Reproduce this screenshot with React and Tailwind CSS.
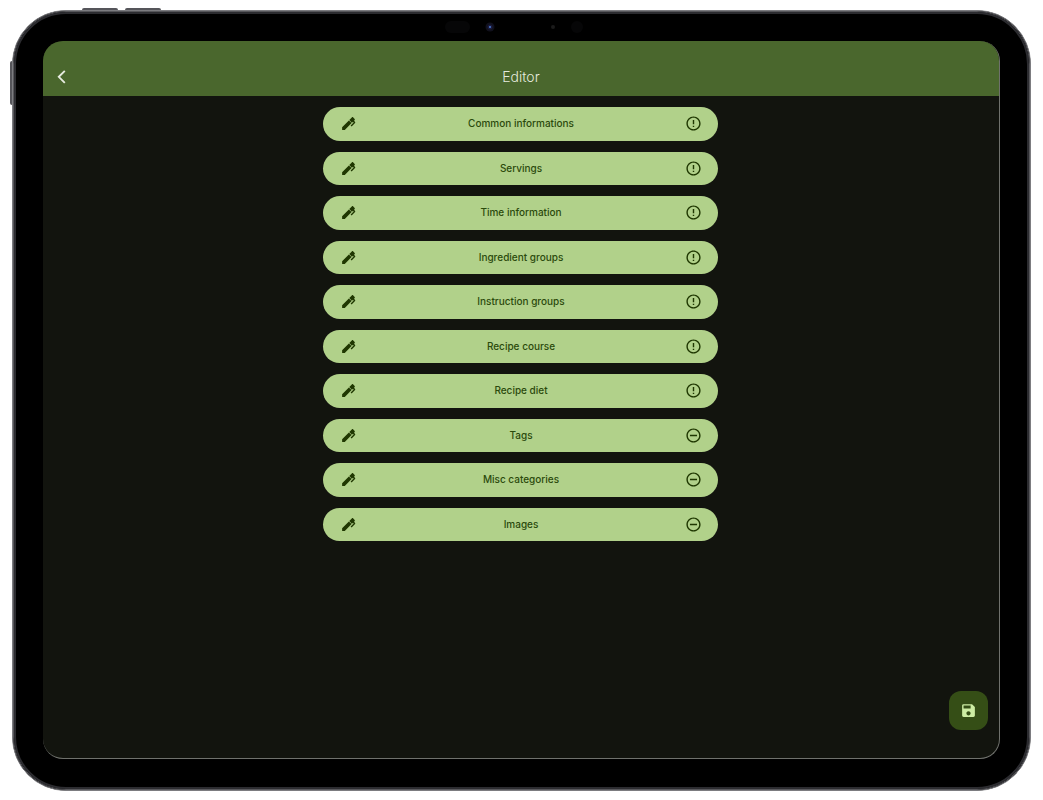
import React from "react";
import { MdErrorOutline, MdRemoveCircleOutline, MdSave } from "react-icons/md";

const sections = [
  { label: "Common informations", status: "required" },
  { label: "Servings", status: "required" },
  { label: "Time information", status: "required" },
  { label: "Ingredient groups", status: "required" },
  { label: "Instruction groups", status: "required" },
  { label: "Recipe course", status: "required" },
  { label: "Recipe diet", status: "required" },
  { label: "Tags", status: "empty" },
  { label: "Misc categories", status: "empty" },
  { label: "Images", status: "empty" },
];

function PenIcon() {
  return (
    <svg viewBox="0 0 24 24" className="size-[17px]" fill="currentColor" aria-hidden="true">
      <path d="M20.71,7.04C20.37,7.38 20.04,7.71 20.03,8.04C20,8.36 20.34,8.69 20.66,9C21.14,9.5 21.61,9.95 21.59,10.44C21.57,10.93 21.06,11.44 20.55,11.94L16.42,16.08L15,14.66L19.25,10.42L18.29,9.46L16.87,10.87L13.12,7.12L16.96,3.29C17.35,2.9 18,2.9 18.37,3.29L20.71,5.63C21.1,6 21.1,6.65 20.71,7.04M3,17.25L12.56,7.68L16.31,11.43L6.75,21H3V17.25Z" />
    </svg>
  );
}

function SectionButton({ label, status }) {
  const StatusIcon = status === "required" ? MdErrorOutline : MdRemoveCircleOutline;
  return (
    <button
      type="button"
      className="flex w-full items-center justify-between rounded-full bg-[#b1d18a] pr-4 pl-[17px] text-[10px] font-medium text-[#1f3701]"
    >
      <PenIcon />
      <span className="text-[#2b4a0c]">{label}</span>
      <StatusIcon className="size-[17px]" aria-hidden="true" />
    </button>
  );
}

function DeviceFrame({ children }) {
  return (
    <div className="relative flex flex-1 rounded-[54px] border border-[#7c7c80] bg-black">
      <div className="absolute -top-[3px] left-[69px] h-[2px] w-9 rounded-t-sm bg-[#55555a]" />
      <div className="absolute -top-[3px] left-[112px] h-[2px] w-9 rounded-t-sm bg-[#55555a]" />
      <div className="absolute top-[50px] -left-[3px] h-11 w-[2px] rounded-l-sm bg-[#55555a]" />
      <div className="flex flex-1 rounded-[53px] border border-[#57575b]">
        <div className="flex flex-1 rounded-[52px] border-2 border-[#2c2c30] px-[27px] pt-[27px] pb-[28px]">
          {children}
        </div>
      </div>
      <div className="absolute inset-x-0 top-[10px] flex h-3 items-center justify-center" aria-hidden="true">
        <svg viewBox="0 0 156 12" className="h-3 w-[156px]">
          <rect x="1" y="0" width="25" height="12" rx="6" fill="#060607" />
          <circle cx="46" cy="6" r="4.5" fill="#10101c" />
          <circle cx="46" cy="6" r="2.5" fill="#1b1b3c" />
          <circle cx="46" cy="6" r="1" fill="#4d7fd8" />
          <circle cx="109" cy="6" r="2" fill="#1b1b1b" />
          <circle cx="133" cy="6" r="6" fill="#060607" />
        </svg>
      </div>
    </div>
  );
}

export default function App() {
  return (
    <div className="flex min-h-screen bg-white px-3 pt-[10px] pb-[9px] font-['Inter',sans-serif]">
      <DeviceFrame>
        <div className="relative flex flex-1 flex-col overflow-hidden rounded-[20px] border-r border-b border-[#6f716c] bg-[#12140e]">
          <header className="grid h-[55px] grid-cols-[1fr_auto_1fr] items-end bg-[#4a672d] px-3 pb-[9px] text-[#e6ebdf]">
            <button type="button" aria-label="Back" className="flex h-5 w-4 items-center">
              <svg viewBox="0 0 14 16" className="h-4 w-[14px]" fill="none" stroke="currentColor" strokeWidth="1.9" aria-hidden="true">
                <path d="M9.8 1.8 L3.8 7.8 L9.8 13.8" />
              </svg>
            </button>
            <h1 className="text-sm leading-5 font-light">Editor</h1>
          </header>
          <main className="flex flex-1 justify-center pt-[11px] pr-3 pb-10 pl-[11px]">
            <div className="grid h-[434px] w-full max-w-[395px] auto-rows-fr gap-[11px]">
              {sections.map((section) => (
                <SectionButton key={section.label} {...section} />
              ))}
            </div>
          </main>
          <button
            type="button"
            aria-label="Save"
            className="absolute right-[11px] bottom-7 flex size-[39px] items-center justify-center rounded-xl bg-[#354e16] text-[#cdeda3]"
          >
            <MdSave className="size-[17px]" aria-hidden="true" />
          </button>
        </div>
      </DeviceFrame>
    </div>
  );
}
